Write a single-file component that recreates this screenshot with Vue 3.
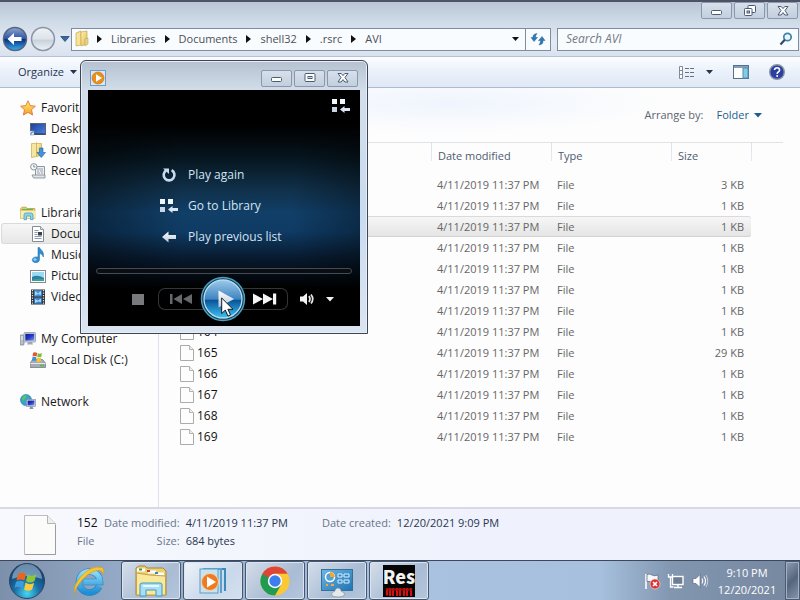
<script setup>
const crumbs = ['Libraries', 'Documents', 'shell32', '.rsrc', 'AVI']

const groups = [
  {
    name: 'Favorites',
    icon: 'star',
    items: [
      { name: 'Desktop', icon: 'desktop' },
      { name: 'Downloads', icon: 'downloads' },
      { name: 'Recent Places', icon: 'recent' },
    ],
  },
  {
    name: 'Libraries',
    icon: 'libraries',
    items: [
      { name: 'Documents', icon: 'document', selected: true },
      { name: 'Music', icon: 'music' },
      { name: 'Pictures', icon: 'pictures' },
      { name: 'Videos', icon: 'videos' },
    ],
  },
  { name: 'My Computer', icon: 'computer', items: [{ name: 'Local Disk (C:)', icon: 'disk' }] },
  { name: 'Network', icon: 'network', items: [] },
]

const sizes = {
  150: '3 KB', 151: '1 KB', 152: '1 KB', 160: '1 KB', 161: '1 KB', 162: '1 KB', 163: '1 KB',
  164: '1 KB', 165: '29 KB', 166: '1 KB', 167: '1 KB', 168: '1 KB', 169: '1 KB',
}
const files = Object.entries(sizes).map(([name, size]) => ({
  name,
  size,
  date: '4/11/2019 11:37 PM',
  type: 'File',
  selected: name === '152',
}))

const apps = [
  { name: 'Windows Explorer', icon: 'explorer' },
  { name: 'Windows Media Player', icon: 'wmp', active: true },
  { name: 'Google Chrome', icon: 'chrome' },
  { name: 'Control Panel', icon: 'control' },
  { name: 'Resource Hacker', icon: 'reshack' },
]

const endOptions = [
  { name: 'Play again', icon: 'again' },
  { name: 'Go to Library', icon: 'library' },
  { name: 'Play previous list', icon: 'previous' },
]
</script>

<template>
  <div class="desktop">
    <svg class="sprite" width="0" height="0" aria-hidden="true">
      <defs>
        <linearGradient id="g-folder" x1="0" x2="1" y1="0" y2="1"><stop offset="0" stop-color="#fdf3b4" /><stop offset="1" stop-color="#e0b84e" /></linearGradient>
        <linearGradient id="g-screen" x1="0" x2="1" y1="0" y2="1"><stop offset="0" stop-color="#0d1c8c" /><stop offset=".5" stop-color="#2438c8" /><stop offset="1" stop-color="#7f9cf0" /></linearGradient>
        <linearGradient id="g-desk" x1="0" x2="1" y1="0" y2="1"><stop offset="0" stop-color="#1c3c94" /><stop offset="1" stop-color="#4a86e6" /></linearGradient>
        <linearGradient id="g-star" x1="0" x2="0" y1="0" y2="1"><stop offset="0" stop-color="#fff27a" /><stop offset="1" stop-color="#f79a2c" /></linearGradient>
        <linearGradient id="g-back" x1="0" x2="0" y1="0" y2="1"><stop offset="0" stop-color="#8fa6cf" /><stop offset=".48" stop-color="#2e55a4" /><stop offset=".52" stop-color="#0a2f80" /><stop offset="1" stop-color="#36b2f2" /></linearGradient>
        <linearGradient id="g-fwd" x1="0" x2="0" y1="0" y2="1"><stop offset="0" stop-color="#eff3f7" /><stop offset=".5" stop-color="#dde3ea" /><stop offset=".55" stop-color="#c8d1db" /><stop offset="1" stop-color="#eef3f8" /></linearGradient>
        <linearGradient id="g-play" x1="0" x2="0" y1="0" y2="1"><stop offset="0" stop-color="#9cc8ea" /><stop offset=".5" stop-color="#3f86c0" /><stop offset=".54" stop-color="#0a5599" /><stop offset="1" stop-color="#3cc4f4" /></linearGradient>
        <radialGradient id="g-orb" cx=".5" cy=".85" r=".8"><stop offset="0" stop-color="#48d6f4" /><stop offset=".45" stop-color="#1a6fa6" /><stop offset="1" stop-color="#12355e" /></radialGradient>
        <linearGradient id="g-ie" x1="0" x2="0" y1="0" y2="1"><stop offset="0" stop-color="#8fdcfa" /><stop offset="1" stop-color="#1d8fd6" /></linearGradient>
        <linearGradient id="g-panel" x1="0" x2="1" y1="0" y2="1"><stop offset="0" stop-color="#6fb6e2" /><stop offset="1" stop-color="#1f74b4" /></linearGradient>
        <linearGradient id="g-metal" x1="0" x2="0" y1="0" y2="1"><stop offset="0" stop-color="#ffffff" /><stop offset="1" stop-color="#b9c6da" /></linearGradient>
      </defs>

      <symbol id="folder" viewBox="0 0 16 18">
        <path d="M2 3l5-2v14l-5 1z" fill="#f5e39a" stroke="#c9a850" stroke-width=".7" />
        <path d="M7 2l6-1v13l-6 2z" fill="url(#g-folder)" stroke="#c9a850" stroke-width=".7" />
        <path d="M11 9l3-1v6l-3 2z" fill="#e9d58a" stroke="#b0985a" stroke-width=".5" />
      </symbol>
      <symbol id="star" viewBox="0 0 16 16">
        <path d="M8 .8l2.200 4.800 5.200.6-3.900 3.500 1.100 5.300L8 12.400 3.400 15l1.100-5.300L.6 6.200l5.200-.6z" fill="url(#g-star)" stroke="#dc7a32" stroke-width=".9" stroke-linejoin="round" />
      </symbol>
      <symbol id="desktop" viewBox="0 0 16 16">
        <rect x=".5" y="2.500" width="15" height="11" fill="url(#g-desk)" stroke="#5c6472" />
        <path d="M1 13h14" stroke="#27324a" />
        <rect x="0" y="10" width="4" height="4" fill="#e8eef6" stroke="#7d8ea6" stroke-width=".5" />
        <path d="M1 13.500c0-2 1-2.500 2.500-2.500" fill="none" stroke="#2d62b8" />
      </symbol>
      <symbol id="downloads" viewBox="0 0 16 16">
        <path d="M1.500 1.500h4l1-1v14l-5 1z" fill="#f6e7a0" stroke="#caa94e" stroke-width=".7" />
        <path d="M6.500 1.500h5v12l-5 1z" fill="url(#g-folder)" stroke="#caa94e" stroke-width=".7" />
        <path d="M9.500 6h3.500v4.500h2.500L11.300 15.500 7 10.500h2.500z" fill="#3f94dc" stroke="#1d62a8" stroke-width=".6" />
      </symbol>
      <symbol id="recent" viewBox="0 0 16 16">
        <path d="M5.500 3.500h9v10h-9z" fill="#eceff2" stroke="#8f979f" />
        <path d="M7 6h6M7 8h2m1 0h3M7 10h3m1 0h2" stroke="#9aa3ac" />
        <path d="M2 12h13v3H3.500z" fill="#dfe4e8" stroke="#7d858d" stroke-width=".8" />
        <circle cx="3.800" cy="3.800" r="3.200" fill="#f6f8fa" stroke="#8a939c" />
        <path d="M3.800 2v2h1.600" fill="none" stroke="#6a737c" stroke-width=".8" />
      </symbol>
      <symbol id="libraries" viewBox="0 0 16 16">
        <path d="M.7 3.500l1.500-1.300h4l1 1.300h7.600v10H.7z" fill="#e9d373" stroke="#bd9c48" stroke-width=".8" />
        <path d="M2 4.500h11" stroke="#6bb15c" stroke-width="1.200" />
        <path d="M.7 6h14.600v7.500H.7z" fill="#f7edae" />
        <path d="M4 14.700V10q0-2 2-2h5q2 0 2 2v4.700h-2.500V11h-4v3.700z" fill="#8fd3ee" stroke="#4a9fc4" stroke-width=".8" />
      </symbol>
      <symbol id="document" viewBox="0 0 16 16">
        <path d="M2.500.5h8l3 3v12h-11z" fill="#fff" stroke="#858b93" />
        <path d="M10.500.5v3h3" fill="#e1e5ea" stroke="#858b93" stroke-width=".8" />
        <path d="M4.500 4.500h4M4.500 6.500h3M4.500 8.500h3M4.500 10.500h7M4.500 12.500h7" stroke="#7f90a6" stroke-width=".9" />
        <rect x="8" y="6" width="4" height="3.500" fill="#38424f" />
      </symbol>
      <symbol id="music" viewBox="0 0 16 16">
        <path d="M8 .5h1.500C10.500 3 14.500 4 13.300 10 12.500 7.500 11 6.800 9.500 6.500v6c0 4.200-7 4-7.200.7C2.200 10.300 5.500 9.300 8 10.200z" fill="#2f8fd0" stroke="#1d6ba8" stroke-width=".5" />
        <ellipse cx="5" cy="12.500" rx="1.600" ry="1.200" fill="#8fd2f6" />
      </symbol>
      <symbol id="pictures" viewBox="0 0 16 16">
        <rect x=".5" y="2.500" width="15" height="12" fill="#fff" stroke="#7f8a96" />
        <rect x="2" y="4" width="12" height="9" fill="#9adbf2" />
        <path d="M2 9q5-3 12 1v3H2z" fill="#2f7fa6" /><path d="M2 12q5-2 12-1v2H2z" fill="#3fa08c" />
      </symbol>
      <symbol id="videos" viewBox="0 0 16 16">
        <rect x="1" y=".5" width="14" height="15" fill="#2c3138" />
        <path d="M2.500 1v14M13.500 1v14" stroke="#dfe5ea" stroke-width="1.300" stroke-dasharray="1.300 1.200" />
        <rect x="4.200" y="1.200" width="7.600" height="6.300" fill="#4a93d6" /><rect x="4.200" y="8.500" width="7.600" height="6.300" fill="#3b82c8" />
        <path d="M5 2l3 2.500L11 2v4L8 5 5 6.500zM5 10l3 1.500 3-2v3.500l-3-.5-3 1.500z" fill="#a9d8f8" />
      </symbol>
      <symbol id="computer" viewBox="0 0 16 16">
        <rect x="0" y="4" width="4" height="10" rx=".8" fill="#b9bfc7" stroke="#717983" stroke-width=".7" /><path d="M1 6h2M1 8h2" stroke="#fff" stroke-width=".8" />
        <rect x="4" y="1.500" width="11.500" height="9.500" rx=".8" fill="#d6dae0" stroke="#868e98" stroke-width=".7" />
        <rect x="5.300" y="2.800" width="9" height="6.800" fill="url(#g-screen)" />
        <path d="M8 11h4l1 2.500H7z" fill="#a1a8b2" />
      </symbol>
      <symbol id="disk" viewBox="0 0 16 16">
        <path d="M0 11.500l2.500-4h10l3 3.500v4.500H0z" fill="#a5acb4" stroke="#757d86" stroke-width=".8" />
        <path d="M.5 11.500h15" stroke="#e4e8ec" /><path d="M10 13.500h4" stroke="#57b84c" stroke-width="1.600" />
        <path d="M3 .8q2.200-1 4.200.2L6.600 4.600q-2-1-4 0z" fill="#e2572c" /><path d="M7.800 1.200q2 1 4-.2L11.400 4.800q-2 1-4.200 0z" fill="#7dbb3c" />
        <path d="M2.400 5.200q2-1 4 0L6 9q-2-1-4 0z" fill="#3f8fd8" /><path d="M7 5.400q2 1 4.200 0L10.800 9.500q-2 1-4.300 0z" fill="#f6c330" />
      </symbol>
      <symbol id="network" viewBox="0 0 16 16">
        <circle cx="6" cy="6" r="5.500" fill="#35a5cf" stroke="#1c6f9e" stroke-width=".6" />
        <path d="M2 3q3-2.500 5-1.500L5 5 2.500 7zM6 7l4-2v4l-3 2z" fill="#58c36a" />
        <rect x="6.500" y="5.500" width="9" height="7" fill="#d3d8df" stroke="#7f8893" stroke-width=".6" /><rect x="7.600" y="6.600" width="6.800" height="4.800" fill="url(#g-screen)" />
        <path d="M10 12.500h2.500l1 2.500h-4z" fill="#8e96a1" />
      </symbol>
      <symbol id="file" viewBox="0 0 14 16">
        <path d="M.5.500h9l4 4v11H.5z" fill="#fdfdfd" stroke="#ababab" /><path d="M9.500.500v4h4" fill="#efefef" stroke="#b4b4b4" />
      </symbol>

      <symbol id="min" viewBox="0 0 14 14"><rect x="1.500" y="6.500" width="10" height="4" rx="1" fill="#fff" stroke="#4b5a75" /></symbol>
      <symbol id="max" viewBox="0 0 14 14"><rect x="2" y="2.500" width="10" height="8" rx="1" fill="#fff" stroke="#4b5a75" /><rect x="5" y="5.500" width="4" height="2" fill="#c5d1e0" stroke="#4b5a75" /></symbol>
      <symbol id="restore" viewBox="0 0 14 14">
        <rect x="5" y="1.500" width="7.500" height="7" rx=".8" fill="#fff" stroke="#4b5a75" /><rect x="1.500" y="4.500" width="7.500" height="7" rx=".8" fill="#fff" stroke="#4b5a75" />
        <rect x="4" y="7" width="2.500" height="2" fill="#c5d1e0" stroke="#4b5a75" />
      </symbol>
      <symbol id="close" viewBox="0 0 14 14">
        <path d="M2 2.500h3.200L7 4.600l1.800-2.100H12L9 6.500l3 4.500H8.800L7 8.600 5.200 11H2l3-4.500z" fill="#fff" stroke="#4b5a75" stroke-linejoin="round" />
      </symbol>

      <symbol id="again" viewBox="0 0 18 18">
        <path d="M6.200 4.400a5.400 5.400 0 1 0 5.400-.2" fill="none" stroke="#cbdcf0" stroke-width="2.600" /><path d="M3 2.500h6v5.500z" fill="#cbdcf0" />
      </symbol>
      <symbol id="library" viewBox="0 0 18 16">
        <path d="M0 1h5v5H0zM8 1h5v5H8z" fill="#f2f8ff" /><path d="M0 9h5v5H0z" fill="#c8d6e6" />
        <path d="M8 11.500L12.500 8v2H18v3h-5.500v2z" fill="#dbe6f3" />
      </symbol>
      <symbol id="previous" viewBox="0 0 18 18"><path d="M2 9l6.500-5.500V7H16v4H8.500v3.500z" fill="url(#g-metal)" /></symbol>

      <symbol id="explorer" viewBox="0 0 34 34">
        <path d="M2 4l3-2h6l2 2h16l3 3v24H2z" fill="#ecd173" stroke="#a98738" />
        <path d="M3 6h8M14 8h8M22 10h8" stroke="#fff" stroke-width="3" /><path d="M5 5.500h3" stroke="#3e9f4a" stroke-width="2" /><path d="M13 7h3" stroke="#d2382e" stroke-width="2" /><path d="M21 9h3" stroke="#3a86cf" stroke-width="2" />
        <path d="M2.500 9l13 2 16 1v19h-29z" fill="#f8e99c" stroke="#c5a24c" />
        <path d="M6 32V21q0-2 2-2h18q2 0 2 2v11h-6v-6H12v6z" fill="#a7def3" stroke="#4298c2" /><path d="M9 22h16" stroke="#e5f7ff" stroke-width="2" />
      </symbol>
      <symbol id="wmp" viewBox="0 0 34 34">
        <path d="M10 5h19v22" fill="none" stroke="#3b88ba" stroke-width="2" /><path d="M7 5h18v24" fill="#b9dcf0" stroke="#5aa2cd" stroke-width="2" />
        <rect x="4" y="5" width="18" height="24" fill="#c9e2f1" stroke="#5b9cc4" />
        <circle cx="14" cy="18" r="8.500" fill="#ee7a22" stroke="#fad2a2" /><path d="M11 12.500l9 5.500-9 5.500z" fill="#fff" />
      </symbol>
      <symbol id="chrome" viewBox="0 0 34 34">
        <circle cx="17" cy="17" r="14.500" fill="#fcc934" />
        <path d="M4.400 9.700A14.500 14.500 0 0 0 17 31.500L23.300 20.600 17 17z" fill="#229b52" />
        <path d="M4.400 9.700A14.500 14.500 0 0 1 29.600 9.700H17L10.700 20.600z" fill="#df4637" />
        <path d="M4.400 9.700L10.700 20.600 17 17z" fill="#229b52" />
        <circle cx="17" cy="17" r="7.200" fill="#fff" /><circle cx="17" cy="17" r="5.700" fill="#3d7eee" />
      </symbol>
      <symbol id="control" viewBox="0 0 34 34">
        <rect x="1.500" y="5.500" width="31" height="21" fill="url(#g-panel)" stroke="#33709c" />
        <circle cx="10" cy="13" r="4.500" fill="#4fa2d8" stroke="#fff" stroke-width="1.500" /><path d="M10 13V8a5 5 0 0 1 5 5z" fill="#f5a72c" />
        <path d="M18 10h4v3h-4zM24 10h5v3h-5zM18 16h4v3h-4zM24 16h5v3h-5z" fill="#2d85c5" stroke="#dff0fc" /><path d="M6 21h2M11 21h3" stroke="#f0a94a" stroke-width="2" />
        <path d="M11.500 30q0-2 3-2.500 1-3.500 3.500-3.500t3.500 3.500q3 .5 3 2.500 0 3-6.500 3t-6.500-3z" fill="#e4e9ed" stroke="#8d98a3" stroke-width=".8" />
      </symbol>
      <symbol id="reshack" viewBox="0 0 34 34">
        <rect x="1" y="1" width="32" height="32" fill="#050505" />
        <text x="17" y="20" text-anchor="middle" class="res">Res</text>
        <path d="M5 24.500v7M8 24v8M11 24v8M15 24v8M18 24v8M22 24v8M25 24v8M29 24v8" stroke="#d01212" stroke-width="2.200" /><path d="M4 25.500h26" stroke="#a80d0d" stroke-width="2" />
      </symbol>
    </svg>

    <main class="explorer">
      <header class="titlebar">
        <button class="caption" aria-label="Minimize"><svg width="14" height="14"><use href="#min" /></svg></button>
        <button class="caption" aria-label="Restore"><svg width="14" height="14"><use href="#restore" /></svg></button>
        <button class="caption" aria-label="Close"><svg width="14" height="14"><use href="#close" /></svg></button>
      </header>

      <nav class="navbar" aria-label="Address">
        <button class="round" aria-label="Back">
          <svg width="26" height="26" viewBox="0 0 26 26">
            <circle cx="13" cy="13" r="11.500" fill="url(#g-back)" stroke="#56667f" stroke-width="1.500" />
            <path d="M5.500 13l6.500-6v4h7.500v4H12v4z" fill="#fff" />
          </svg>
        </button>
        <button class="round" aria-label="Forward">
          <svg width="26" height="26" viewBox="0 0 26 26"><circle cx="13" cy="13" r="11.500" fill="url(#g-fwd)" stroke="#8995a3" stroke-width="1.500" /></svg>
        </button>
        <button class="history" aria-label="Recent pages">
          <svg width="10" height="6" viewBox="0 0 10 6"><path d="M.8.500h8.400L5 5.500z" fill="#38699a" stroke="#234a75" stroke-width=".8" /></svg>
        </button>
        <div class="address">
          <svg class="address-icon" width="16" height="18"><use href="#folder" /></svg>
          <template v-for="crumb in crumbs" :key="crumb">
            <svg class="crumb-arrow" width="5" height="8" viewBox="0 0 5 8"><path d="M0 0l5 4-5 4z" fill="#111" /></svg>
            <a class="crumb" href="#">{{ crumb }}</a>
          </template>
          <button class="address-drop" aria-label="Previous locations">
            <svg width="7" height="4" viewBox="0 0 7 4"><path d="M0 0h7L3.500 4z" fill="#111" /></svg>
          </button>
          <button class="refresh" aria-label="Refresh">
            <svg width="16" height="16" viewBox="0 0 16 16">
              <path d="M1 6.500L4 10.500l3.500-4H5.500Q5.500 4 7 2.500 2.500 3 3 6.500z" fill="#2f78b0" stroke="#2b6797" stroke-width=".5" />
              <path d="M15 9.500L12 5.500 8.500 9.500h2q0 2.500-1.500 4.500 4.500-.5 4-4.500z" fill="#2f78b0" stroke="#2b6797" stroke-width=".5" />
            </svg>
          </button>
        </div>
        <label class="search">
          <input type="text" placeholder="Search AVI" aria-label="Search AVI" />
          <svg width="14" height="14" viewBox="0 0 14 14"><circle cx="8.500" cy="5" r="3.700" fill="#eaf5fc" stroke="#3a83ab" stroke-width="1.700" /><path d="M5.800 7.800L1.500 12.500" stroke="#324a68" stroke-width="2.200" /></svg>
        </label>
      </nav>

      <div class="toolbar">
        <button class="tool">Organize <svg width="7" height="4" viewBox="0 0 7 4"><path d="M0 0h7L3.500 4z" fill="#26344c" /></svg></button>
        <span class="spacer"></span>
        <button class="tool views" aria-label="Change your view">
          <svg width="16" height="13" viewBox="0 0 16 13">
            <path d="M.5.500h3v12h-3zM.5 4.500h3M.5 8.500h3" fill="#fff" stroke="#808a98" /><path d="M6 2.500h4m1 0h4M6 6.500h4m1 0h4M6 10.500h4m1 0h4" stroke="#66727f" />
          </svg>
          <svg width="7" height="4" viewBox="0 0 7 4"><path d="M0 0h7L3.500 4z" fill="#26344c" /></svg>
        </button>
        <button class="tool" aria-label="Show the preview pane">
          <svg width="16" height="14" viewBox="0 0 16 14"><rect x=".5" y=".5" width="15" height="13" fill="#fff" stroke="#54708c" /><path d="M1 2h14" stroke="#83a0bb" stroke-width="2" /><path d="M10 3h5v10h-5z" fill="#86cbe4" stroke="#4f8fae" /></svg>
        </button>
        <button class="tool" aria-label="Get help">
          <svg width="16" height="16" viewBox="0 0 16 16">
            <circle cx="8" cy="8" r="7.300" fill="#2940a0" stroke="#8b93a8" stroke-width="1.400" />
            <path d="M5.500 6q.2-2.300 2.600-2.300T10.600 6q0 1.200-1.300 2T8.200 10" fill="none" stroke="#fff" stroke-width="1.600" /><circle cx="8.200" cy="12" r="1" fill="#fff" />
          </svg>
        </button>
      </div>

      <div class="body">
        <aside class="sidebar">
          <ul v-for="group in groups" :key="group.name" class="group">
            <li><a class="place head" href="#"><svg width="16" height="16"><use :href="'#' + group.icon" /></svg>{{ group.name }}</a></li>
            <li v-for="item in group.items" :key="item.name">
              <a class="place" :class="{ selected: item.selected }" href="#"><svg width="16" height="16"><use :href="'#' + item.icon" /></svg>{{ item.name }}</a>
            </li>
          </ul>
        </aside>

        <section class="content">
          <div class="arrange">
            <span id="arrange-label">Arrange by:</span>
            <button class="arrange-by" aria-describedby="arrange-label">Folder <svg width="8" height="5" viewBox="0 0 8 5"><path d="M0 0h8L4 4.500z" fill="#1f5d91" /></svg></button>
          </div>
          <table class="files">
            <colgroup><col /><col class="wide" /><col class="wide" /><col class="narrow" /><col class="rest" /></colgroup>
            <thead>
              <tr><th scope="col">Name</th><th scope="col">Date modified</th><th scope="col">Type</th><th scope="col">Size</th><th></th></tr>
            </thead>
            <tbody>
              <tr v-for="file in files" :key="file.name" :class="{ selected: file.selected }">
                <td><span class="name"><svg width="14" height="16"><use href="#file" /></svg>{{ file.name }}</span></td>
                <td>{{ file.date }}</td>
                <td>{{ file.type }}</td>
                <td class="size">{{ file.size }}</td>
                <td class="blank"></td>
              </tr>
            </tbody>
          </table>
        </section>
      </div>

      <footer class="details">
        <svg width="32" height="40" viewBox="0 0 32 40"><path d="M.5.500h23l8 8v31H.5z" fill="#fbfbf9" stroke="#bdbdbb" /><path d="M23.500.500v8h8" fill="#eeeeec" stroke="#b4b4b2" /><path d="M1 39.500h30.500V10" fill="none" stroke="#9c9c9c" /></svg>
        <dl class="facts">
          <dt class="title">152</dt><dd class="kind">File</dd>
          <dt class="label modified">Date modified:</dt><dd class="modified">4/11/2019 11:37 PM</dd>
          <dt class="label bytes">Size:</dt><dd class="bytes">684 bytes</dd>
          <dt class="label created">Date created:</dt><dd class="created">12/20/2021 9:09 PM</dd>
        </dl>
      </footer>
    </main>

    <footer class="taskbar">
      <button class="start" aria-label="Start">
        <svg width="38" height="38" viewBox="0 0 38 38">
          <circle cx="19" cy="19" r="17.500" fill="url(#g-orb)" stroke="#2b4563" /><path d="M4 17a15 15 0 0 1 30 0q-15-6-30 0z" fill="#a9c4da" opacity=".6" />
          <path d="M10 12q4-3 8 0l-1.500 6.500q-4-2-8 0z" fill="#ea6424" /><path d="M19.500 12.500q4 3 9-.5l-2 7q-4 3-8.500 0z" fill="#8ec63a" />
          <path d="M8 20q4-2.500 8 0l-1.500 6q-4-2.500-8 0z" fill="#3f9be0" /><path d="M17.600 20.500q4 3 8.500.5l-2 6.500q-4 2.500-8 0z" fill="#fccb3c" />
        </svg>
      </button>
      <button class="pinned" aria-label="Internet Explorer">
        <svg width="34" height="34" viewBox="0 0 34 34">
          <path d="M27 22.500A10.500 10.500 0 1 1 28 18H11.500" fill="none" stroke="#277fb8" stroke-width="6.600" />
          <path d="M27 22.500A10.500 10.500 0 1 1 28 18H11.500" fill="none" stroke="url(#g-ie)" stroke-width="5.400" />
          <path d="M4 31Q-1 24 9 12.500T30 3.500q3 2 1 7 0-6-8-3.500T8 18.500 4 31z" fill="#f7c62f" stroke="#d49b1c" stroke-width=".6" />
        </svg>
      </button>
      <button v-for="app in apps" :key="app.name" class="task" :class="{ active: app.active }" :aria-label="app.name">
        <svg width="34" height="34"><use :href="'#' + app.icon" /></svg>
      </button>
      <div class="tray">
        <svg width="18" height="18" viewBox="0 0 18 18">
          <path d="M3 2v15" stroke="#fff" stroke-width="1.600" /><path d="M4 2.500q3-1 5 .5t6 0v7q-3 1-5.500 0T4 9.500z" fill="#f5f8fb" stroke="#53617a" stroke-width=".7" />
          <circle cx="12" cy="12" r="5" fill="#d93434" stroke="#f6d3d3" stroke-width=".7" /><path d="M10 10l4 4M14 10l-4 4" stroke="#fff" stroke-width="1.700" />
        </svg>
        <svg width="18" height="18" viewBox="0 0 18 18">
          <rect x="5.500" y="4.500" width="10.500" height="8" fill="#6d7d94" stroke="#fff" stroke-width="1.400" /><path d="M7 15.500h8M11 13v2" stroke="#fff" stroke-width="1.400" />
          <path d="M1.500 2v3h4V2M3.500 5v10h3" fill="none" stroke="#fff" stroke-width="1.300" />
        </svg>
        <svg width="18" height="18" viewBox="0 0 18 18">
          <path d="M2 6.500h3l4-4v13l-4-4H2z" fill="#fff" stroke="#526078" stroke-width=".6" /><path d="M11 6.500q1.500 2.500 0 5M13 4.500q3 4.500 0 9" fill="none" stroke="#f5f8fc" stroke-width="1.200" /><path d="M15 3q3.500 6 0 12" fill="none" stroke="#c5d0de" />
        </svg>
      </div>
      <time class="clock"><span>9:10 PM</span><span>12/20/2021</span></time>
      <button class="peek" aria-label="Show desktop"></button>
    </footer>

    <section class="player" aria-label="Windows Media Player">
      <header class="player-title">
        <svg width="16" height="16" viewBox="0 0 16 16"><rect x=".5" y=".5" width="15" height="15" fill="#e8e4da" stroke="#5ba0e0" /><circle cx="8" cy="8" r="6" fill="#ea8f1d" stroke="#c46f16" stroke-width=".6" /><path d="M6 4.300L12 8l-6 3.700z" fill="#fff" /></svg>
        <span class="spacer"></span>
        <button class="caption" aria-label="Minimize player"><svg width="14" height="14"><use href="#min" /></svg></button>
        <button class="caption" aria-label="Maximize player"><svg width="14" height="14"><use href="#max" /></svg></button>
        <button class="caption" aria-label="Close player"><svg width="14" height="14"><use href="#close" /></svg></button>
      </header>
      <div class="stage">
        <button class="to-library" aria-label="Switch to Library"><svg width="18" height="16"><use href="#library" /></svg></button>
        <div class="options">
          <button v-for="option in endOptions" :key="option.name" class="option"><svg width="18" height="18"><use :href="'#' + option.icon" /></svg>{{ option.name }}</button>
        </div>
        <div class="seek"></div>
        <div class="controls">
          <button class="stop" aria-label="Stop"><svg width="12" height="12" viewBox="0 0 12 12"><path d="M0 1h12v11H0z" fill="#77797b" /></svg></button>
          <button class="skip prev" aria-label="Previous"><svg width="24" height="12" viewBox="0 0 24 12"><path d="M1 1h2.500v10H1zM13 1v10L4.500 6zM23 1v10L14 6z" fill="#66686b" /></svg></button>
          <button class="play" aria-label="Play">
            <svg width="46" height="46" viewBox="0 0 46 46">
              <circle cx="23" cy="23" r="21.500" fill="#123a54" stroke="#49a0c4" stroke-width="1.500" /><circle cx="23" cy="23" r="19" fill="url(#g-play)" stroke="#b6dcf0" stroke-width="1.300" />
              <path d="M18.500 14.500L34 23l-15.500 8.500z" fill="url(#g-metal)" />
            </svg>
          </button>
          <button class="skip next" aria-label="Next"><svg width="24" height="12" viewBox="0 0 24 12"><path d="M0 .5v11L10 6zM10 .5v11L20 6zM20 .5h3.200v11H20z" fill="#f6f6f6" /></svg></button>
          <button class="mute" aria-label="Mute"><svg width="16" height="14" viewBox="0 0 16 14"><path d="M0 4.500h3L7 1v12L3 9.500H0z" fill="#f4f4f4" /><path d="M9 4q2 3 0 6M11 2.500q3.500 4.500 0 9" fill="none" stroke="#e6e6e6" stroke-width="1.700" /></svg></button>
          <button class="more" aria-label="Volume options"><svg width="8" height="5" viewBox="0 0 8 5"><path d="M0 0h8L4 4.500z" fill="#f4f4f4" /></svg></button>
        </div>
      </div>
    </section>

    <svg class="cursor" width="13" height="20" viewBox="0 0 13 20" aria-hidden="true"><path d="M.7 1v15.500l3.600-3.400 2.700 6 2.500-1.200-2.600-5.600H12z" fill="#fff" stroke="#14181f" /></svg>
  </div>
</template>

<style>
body { margin: 0; }
</style>

<style scoped>
.desktop {
  position: relative;
  display: flex;
  flex-direction: column;
  min-height: 100vh;
  overflow: hidden;
  font: 11px/16px "Open Sans", "Noto Sans", sans-serif;
  color: #1a1a1a;
}
.sprite { position: absolute; }
button, input { font: inherit; color: inherit; }
button { display: flex; align-items: center; justify-content: center; padding: 0; border: 0; background: none; }
a { color: inherit; text-decoration: none; }
ul, dl, dd { margin: 0; padding: 0; list-style: none; }
svg { flex: none; }
.res { font: 900 18px "Noto Sans CJK SC", sans-serif; fill: #f1f1f1; }
.spacer { flex: 1; }

.explorer { flex: 1; display: flex; flex-direction: column; background: #fdfdfd; }
.titlebar {
  display: flex;
  justify-content: flex-end;
  gap: 2px;
  height: 22px;
  padding: 0 2px;
  box-sizing: border-box;
  border-top: 2px solid #4b5365;
  background: linear-gradient(#b9c5d4, #d0dbe8);
}
.caption {
  width: 31px;
  height: 17px;
  border: 1px solid #8a97ac;
  border-radius: 2px;
  background: linear-gradient(#d7e0eb, #c3cfde);
}
.navbar { display: flex; align-items: center; height: 34px; padding: 0 1px 0 2px; box-sizing: border-box; background: linear-gradient(#d0dbe8, #e3eaf4 60%, #d8e2ee); }
.round { width: 26px; margin-right: 2px; }
.history { width: 13px; }
.address {
  flex: 1;
  display: flex;
  align-items: center;
  height: 23px;
  box-sizing: border-box;
  border: 1px solid #7e8da1;
  background: #f9fcff;
  color: #4c5057;
}
.address-icon { margin: 0 7px 0 2px; }
.crumb-arrow { margin-right: 9px; }
.crumb { margin-right: 9px; }
.address-drop { width: 20px; height: 21px; margin-left: auto; }
.refresh { width: 25px; height: 21px; border-left: 1px solid #7e8da1; }
.search {
  flex: 0 1 242px;
  display: flex;
  align-items: center;
  height: 23px;
  margin-left: 6px;
  padding: 0 5px 0 8px;
  box-sizing: border-box;
  border: 1px solid #7e8da1;
  background: #f9fcff;
}
.search input { flex: 1; min-width: 0; padding: 0; border: 0; outline: 0; background: none; font-size: 12px; font-style: italic; }
.search input::placeholder { color: #747a83; opacity: 1; }

.toolbar {
  display: flex;
  align-items: center;
  gap: 20px;
  height: 32px;
  padding: 0 15px 0 18px;
  box-sizing: border-box;
  border-top: 1px solid #b6c2d2;
  border-bottom: 1px solid #aebccf;
  background: linear-gradient(#fbfdff, #eaf1fb 50%, #dfe8f5);
  color: #27354d;
}
.tool { gap: 6px; }
.views { gap: 11px; }

.body { flex: 1; display: flex; }
.sidebar { width: 158px; padding-top: 9px; border-right: 1px solid #dde2ea; font-size: 12px; }
.group { margin-bottom: 21px; }
.place { display: flex; align-items: center; gap: 5px; height: 21px; margin-left: 1px; padding-left: 29px; box-sizing: border-box; white-space: nowrap; }
.head { padding-left: 19px; }
.place.selected { border: 1px solid #dadada; border-right: 0; border-radius: 3px 0 0 3px; padding-left: 28px; background: linear-gradient(#f6f6f6, #e7e7e7); }

.content { flex: 1; padding: 0 17px 0 15px; }
.arrange {
  display: flex;
  align-items: center;
  justify-content: flex-end;
  gap: 13px;
  height: 54px;
  padding-right: 21px;
  background: radial-gradient(ellipse 220px 30px at 45% 15px, #eff5fe, #fdfdfd);
  color: #5d6570;
}
.arrange-by { gap: 5px; color: #1f5d91; }
.files { width: 100%; border-collapse: collapse; table-layout: fixed; border-top: 1px solid #dfe3e8; color: #666; }
.wide { width: 120px; }
.narrow { width: 80px; }
.rest { width: 32px; }
.files th {
  height: 31px;
  padding: 5px 7px 10px;
  box-sizing: border-box;
  font-weight: normal;
  text-align: left;
  color: #4f5c6e;
  background: linear-gradient(#dde2e9, #e6eaef) no-repeat 0 0 / 1px 18px;
}
.files th:first-child { background: none; }
.files td { height: 21px; padding: 0 6px; white-space: nowrap; }
.files td.size { padding-right: 7px; text-align: right; }
.files .selected td { background: linear-gradient(#f7f7f7, #e4e4e4); box-shadow: inset 0 1px #dadada, inset 0 -1px #d2d2d2; }
.files .selected td.size { border-radius: 0 3px 3px 0; }
.files .selected td.blank { background: none; box-shadow: none; }
.name { display: flex; align-items: center; gap: 3px; font-size: 12px; color: #111; }

.details {
  display: flex;
  align-items: flex-start;
  gap: 21px;
  height: 53px;
  padding: 6px 24px 0;
  box-sizing: border-box;
  border-top: 2px solid #d5dae3;
  background: linear-gradient(90deg, #f7f9fe, #eff2fc 60%);
}
.facts { display: grid; grid-template-rows: 18px 18px; grid-template-columns: 21px auto auto auto auto; column-gap: 6px; color: #283650; }
.label, .kind { color: #68758a; }
.label { text-align: right; }
.title { grid-area: 1 / 1; font-size: 12px; color: #111; }
.kind { grid-area: 2 / 1; }
.label.modified { grid-area: 1 / 2; }
dd.modified { grid-area: 1 / 3; }
.label.bytes { grid-area: 2 / 2; }
dd.bytes { grid-area: 2 / 3; }
.label.created { grid-area: 1 / 4; padding-left: 28px; }
dd.created { grid-area: 1 / 5; }

.taskbar {
  display: flex;
  align-items: center;
  height: 40px;
  box-sizing: border-box;
  border-top: 1px solid #3a4860;
  background: linear-gradient(90deg, #7d90ab, #92a8c4 14%, #a9c2df 50%, #a6c0dd 75%, #8296b0 84%, #76879f);
}
.start { width: 54px; }
.pinned { width: 67px; padding-left: 3px; box-sizing: border-box; }
.task {
  width: 60px;
  height: 39px;
  margin-right: 2px;
  box-sizing: border-box;
  border: 1px solid #46566e;
  border-radius: 3px;
  background: linear-gradient(135deg, #d5deea, #a9bcd4 60%, #b4c6dc);
  box-shadow: inset 0 0 0 1px #dbe5f0;
}
.task.active { background: linear-gradient(135deg, #eef3f9, #c9d8ea 60%, #d3e0ef); }
.tray { display: flex; gap: 6px; margin-left: auto; }
.clock { display: flex; flex-direction: column; align-items: center; width: 76px; line-height: 17px; color: #fff; }
.peek { width: 15px; height: 39px; box-sizing: border-box; border: 1px solid #4c5b73; box-shadow: inset 0 0 0 1px #a2b0c3; background: linear-gradient(135deg, #8d9db3, #55657c 50%, #8797ae); }

.player {
  position: absolute;
  left: 80px;
  top: 60px;
  width: 288px;
  padding: 0 7px 7px;
  box-sizing: border-box;
  border: 1px solid #3d4656;
  border-radius: 6px 6px 0 0;
  background: linear-gradient(#b5c1d0, #d3deea 30px, #c9dbef 55%, #dbe4f1);
  box-shadow: inset 0 0 0 1px #e8eef6;
}
.player-title { display: flex; align-items: center; gap: 2px; height: 29px; padding: 5px 2px 0; box-sizing: border-box; }
.stage {
  display: flex;
  flex-direction: column;
  height: 236px;
  background:
    linear-gradient(90deg, rgba(0, 0, 0, .4), transparent 35%, transparent 75%, rgba(0, 0, 0, .3)),
    linear-gradient(#000 15%, #06141d 28%, #103049 42%, #113f68 52%, #0f3b64 60%, #081b30 71%, #000 84%);
}
.to-library { align-self: flex-end; margin: 8px 10px 0 0; }
.options { display: flex; flex-direction: column; margin: 45px 0 16px 72px; font-size: 12px; color: #d3e4f4; }
.option { gap: 10px; height: 31px; justify-content: flex-start; }
.seek { height: 6px; margin: 0 8px; box-sizing: border-box; border: 1px solid #454b52; border-radius: 3px; background: #0a0d12; }
.controls { display: flex; align-items: center; height: 46px; margin-top: 2px; padding-left: 44px; }
.stop { margin-right: 14px; }
.skip { width: 45px; height: 22px; box-sizing: border-box; border: 1px solid #333639; }
.prev { border-right: 0; border-radius: 7px 0 0 7px; margin-right: -3px; }
.next { border-left: 0; border-radius: 0 7px 7px 0; margin-left: -3px; }
.play { position: relative; }
.mute { margin: 0 10px 0 12px; }

.cursor { position: absolute; left: 221px; top: 297px; }
</style>
